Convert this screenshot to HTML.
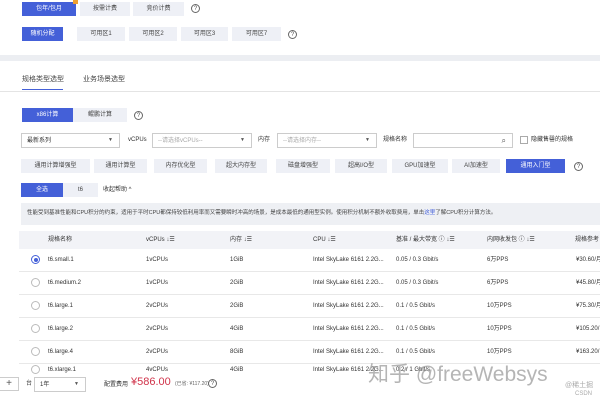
<!DOCTYPE html><html><head><meta charset="utf-8"><style>
*{margin:0;padding:0;box-sizing:border-box}
body{width:600px;height:400px;overflow:hidden;background:#fff;font-family:"Liberation Sans","Noto Sans CJK SC",sans-serif;font-size:6px;line-height:1;color:#333;position:relative}
.a{position:absolute;white-space:nowrap;line-height:1}
.b{position:absolute;height:14px;background:#eef0f6;color:#444;display:flex;align-items:center;justify-content:center;font-size:6px}
.p{background:#4460d8;color:#fff}
.q{position:absolute;width:9px;height:9px;border:1px solid #666;border-radius:50%;font-size:6px;display:flex;align-items:center;justify-content:center;color:#555}
.s{position:absolute;height:15px;border:1px solid #ccc;background:#fff;font-size:6px;color:#aaa;padding-left:5px;display:flex;align-items:center}
.s i{position:absolute;right:6px;font-style:normal;color:#555;font-size:5px}
.row{position:absolute;left:19px;width:581px;height:23px;border-bottom:1px solid #e8e8e8;font-size:6px}
.row span{position:absolute;top:8px;white-space:nowrap;line-height:1}
.r{position:absolute;left:12px;top:6px;width:9px;height:9px;border:1px solid #bbb;border-radius:50%}
</style></head><body>
<div class="b p" style="left:22px;top:2px;width:54px">包年/包月</div>
<div class="a" style="left:73px;top:0;width:5px;height:4px;background:#f0a030"></div>
<div class="b" style="left:80px;top:2px;width:50px">按需计费</div>
<div class="b" style="left:133px;top:2px;width:51px">竞价计费</div>
<div class="q" style="left:191px;top:4px">?</div>

<div class="b p" style="left:22px;top:27px;width:41px">随机分配</div>
<div class="b" style="left:77px;top:27px;width:48px">可用区1</div>
<div class="b" style="left:129px;top:27px;width:48px">可用区2</div>
<div class="b" style="left:181px;top:27px;width:47px">可用区3</div>
<div class="b" style="left:232px;top:27px;width:49px">可用区7</div>
<div class="q" style="left:288px;top:30px">?</div>

<div class="a" style="left:0;top:55px;width:600px;height:6px;background:#eceef2"></div>

<div class="a" style="left:22px;top:76px;font-size:7px;color:#444">规格类型选型</div>
<div class="a" style="left:22px;top:89px;width:41px;height:1px;background:#4460d8"></div>
<div class="a" style="left:83px;top:76px;font-size:7px;color:#444">业务场景选型</div>
<div class="a" style="left:0;top:91px;width:600px;height:1px;background:#e4e4e4"></div>

<div class="b p" style="left:22px;top:108px;width:51px">x86计算</div>
<div class="b" style="left:73px;top:108px;width:54px">鲲鹏计算</div>
<div class="q" style="left:134px;top:111px">?</div>

<div class="s" style="left:21px;top:133px;width:99px;color:#333">最新系列<i>▼</i></div>
<div class="a" style="left:128px;top:137px">vCPUs</div>
<div class="s" style="left:152px;top:133px;width:100px">--请选择vCPUs--<i>▼</i></div>
<div class="a" style="left:258px;top:137px">内存</div>
<div class="s" style="left:277px;top:133px;width:100px">--请选择内存--<i>▼</i></div>
<div class="a" style="left:383px;top:137px">规格名称</div>
<div class="s" style="left:413px;top:133px;width:100px"><i style="font-size:8px">⌕</i></div>
<div class="a" style="left:520px;top:136px;width:8px;height:8px;border:1px solid #aaa"></div>
<div class="a" style="left:531px;top:137px">隐藏售罄的规格</div>

<div class="b" style="left:21px;top:159px;width:69px">通用计算增强型</div>
<div class="b" style="left:94px;top:159px;width:53px">通用计算型</div>
<div class="b" style="left:154px;top:159px;width:53px">内存优化型</div>
<div class="b" style="left:215px;top:159px;width:52px">超大内存型</div>
<div class="b" style="left:276px;top:159px;width:54px">磁盘增强型</div>
<div class="b" style="left:335px;top:159px;width:52px">超高I/O型</div>
<div class="b" style="left:392px;top:159px;width:56px">GPU加速型</div>
<div class="b" style="left:452px;top:159px;width:48px">AI加速型</div>
<div class="b p" style="left:506px;top:159px;width:59px">通用入门型</div>
<div class="q" style="left:574px;top:162px">?</div>

<div class="b p" style="left:21px;top:183px;width:42px">全选</div>
<div class="b" style="left:63px;top:183px;width:35px">t6</div>
<div class="a" style="left:103px;top:187px">收起帮助 ^</div>

<div class="a" style="left:21px;top:203px;width:579px;height:22px;background:#eef0f4;padding:8px 6px;font-size:5.5px;color:#444">性能受到基准性能和CPU积分的约束，适用于平时CPU都保持较低利用率而又需要瞬时冲高的场景，是成本最低的通用型实例。使用积分机制不额外收取费用，单击<span style="color:#4460d8">这里</span>了解CPU积分计算方法。</div>

<div class="row" style="top:231px;height:18px;background:#f2f3f7;border:none"><span style="left:29px;top:6px">规格名称</span><span style="left:127px;top:6px">vCPUs ↓☰</span><span style="left:211px;top:6px">内存 ↓☰</span><span style="left:294px;top:6px">CPU ↓☰</span><span style="left:377px;top:6px">基准 / 最大带宽 ⓘ ↓☰</span><span style="left:468px;top:6px">内网收发包 ⓘ ↓☰</span><span style="left:556px;top:6px">规格参考</span></div>

<div class="row" style="top:249px"><div class="r" style="border-color:#4460d8"><div style="margin:1.5px;width:4px;height:4px;background:#4460d8;border-radius:50%"></div></div><span style="left:29px">t6.small.1</span><span style="left:127px">1vCPUs</span><span style="left:211px">1GiB</span><span style="left:294px">Intel SkyLake 6161 2.2G...</span><span style="left:377px">0.05 / 0.3 Gbit/s</span><span style="left:468px">6万PPS</span><span style="left:557px">¥30.60/月</span></div>
<div class="row" style="top:272px"><div class="r"></div><span style="left:29px">t6.medium.2</span><span style="left:127px">1vCPUs</span><span style="left:211px">2GiB</span><span style="left:294px">Intel SkyLake 6161 2.2G...</span><span style="left:377px">0.05 / 0.3 Gbit/s</span><span style="left:468px">6万PPS</span><span style="left:557px">¥45.80/月</span></div>
<div class="row" style="top:295px"><div class="r"></div><span style="left:29px">t6.large.1</span><span style="left:127px">2vCPUs</span><span style="left:211px">2GiB</span><span style="left:294px">Intel SkyLake 6161 2.2G...</span><span style="left:377px">0.1 / 0.5 Gbit/s</span><span style="left:468px">10万PPS</span><span style="left:557px">¥75.30/月</span></div>
<div class="row" style="top:318px"><div class="r"></div><span style="left:29px">t6.large.2</span><span style="left:127px">2vCPUs</span><span style="left:211px">4GiB</span><span style="left:294px">Intel SkyLake 6161 2.2G...</span><span style="left:377px">0.1 / 0.5 Gbit/s</span><span style="left:468px">10万PPS</span><span style="left:557px">¥105.20/</span></div>
<div class="row" style="top:341px"><div class="r"></div><span style="left:29px">t6.large.4</span><span style="left:127px">2vCPUs</span><span style="left:211px">8GiB</span><span style="left:294px">Intel SkyLake 6161 2.2G...</span><span style="left:377px">0.1 / 0.5 Gbit/s</span><span style="left:468px">10万PPS</span><span style="left:557px">¥163.20/</span></div>
<div class="row" style="top:362px;border:none"><div class="r" style="top:3px"></div><span style="left:29px;top:5px">t6.xlarge.1</span><span style="left:127px;top:5px">4vCPUs</span><span style="left:211px;top:5px">4GiB</span><span style="left:294px;top:5px">Intel SkyLake 6161 2.2G...</span><span style="left:377px;top:5px">0.2 / 1 Gbit/s</span></div>

<div class="a" style="left:0;top:374px;width:600px;height:26px;background:#fff"></div>
<div class="a" style="left:0;top:377px;width:19px;height:14px;border:1px solid #ccc;border-left:none;font-size:10px;text-align:center;line-height:12px;color:#555">+</div>
<div class="a" style="left:26px;top:381px">台</div>
<div class="s" style="left:34px;top:377px;width:52px;color:#333">1年<i>▼</i></div>
<div class="a" style="left:104px;top:382px">配置费用</div>
<div class="a" style="left:131px;top:377px;font-size:11px;color:#d0334a">¥586.00</div>
<div class="a" style="left:175px;top:382px;font-size:5px;color:#666">(已省: ¥117.20)</div>
<div class="q" style="left:208px;top:379px">?</div>
<div class="a" style="left:368px;top:364px;font-size:21px;color:rgba(150,150,150,.7)">知乎 @freeWebsys</div>
<div class="a" style="left:565px;top:382px;font-size:7px;color:#aaa">@稀土掘</div>
<div class="a" style="left:575px;top:391px;font-size:6px;color:#aaa">CSDN</div>
</body></html>
